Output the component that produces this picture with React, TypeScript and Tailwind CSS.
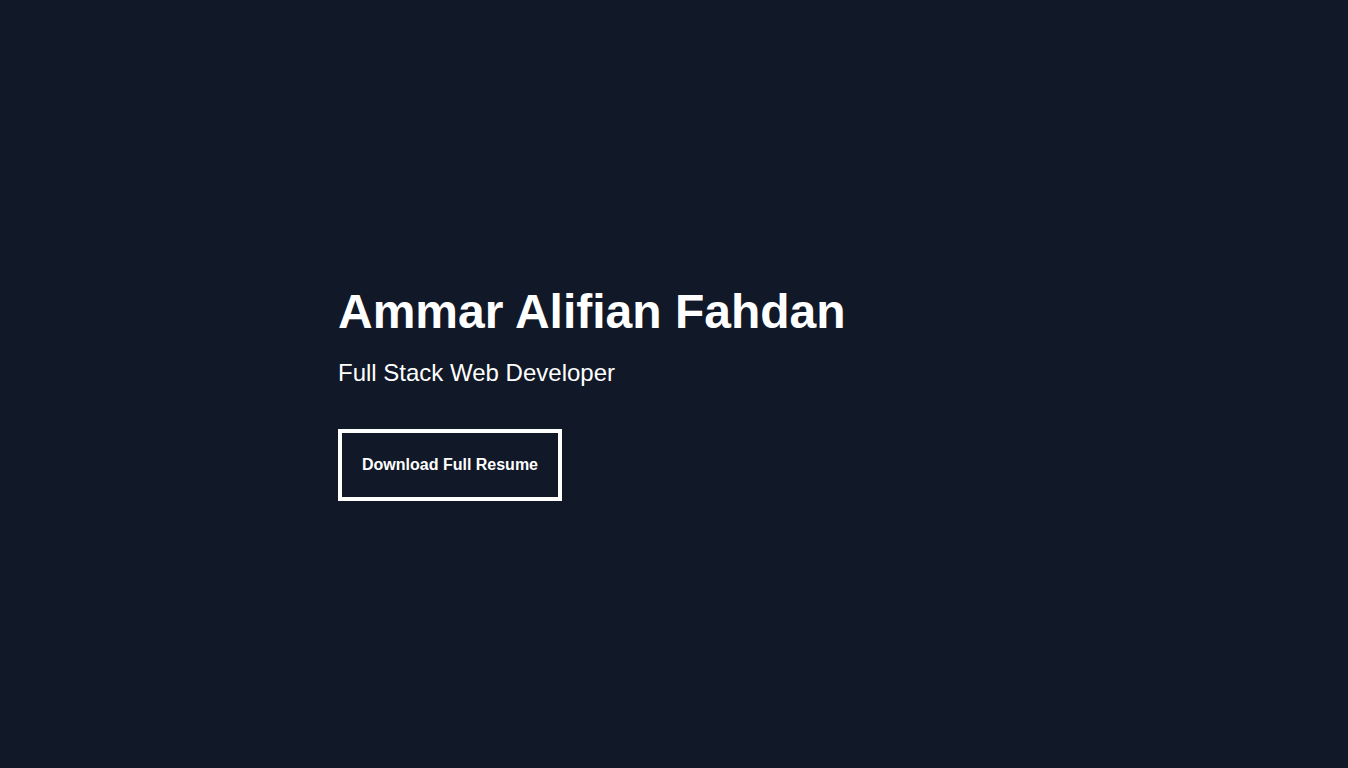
import React from "react";

export default function App() {
  return (
    <div
      className="min-h-screen bg-[#111827] text-white flex items-center pt-5"
      style={{ fontFamily: '"Liberation Sans", Arial, sans-serif' }}
    >
      <div className="w-full max-w-2xl mx-auto">
        <h1 className="text-5xl font-bold leading-none">Ammar Alifian Fahdan</h1>
        <p className="text-2xl mt-[21px]">Full Stack Web Developer</p>
        <button className="mt-10 border-4 border-white px-5 py-5 text-base font-bold leading-6 bg-transparent text-white">
          Download Full Resume
        </button>
      </div>
    </div>
  );
}
